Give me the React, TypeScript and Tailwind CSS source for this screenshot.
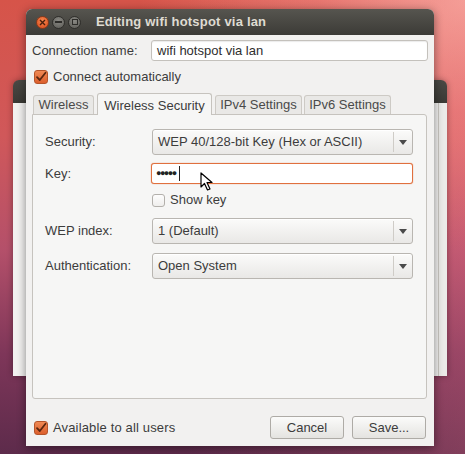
import React from "react";

const font = "font-['Liberation_Sans',Arial,sans-serif]";

function Check({ checked }: { checked: boolean }) {
  if (checked) {
    return (
      <div className="w-[14px] h-[14px] rounded-[3px] border border-[#b5542a] bg-[linear-gradient(180deg,#f08a55,#dc5f2c)] flex items-center justify-center shrink-0">
        <svg width="12" height="12" viewBox="0 0 12 12">
          <path d="M2 6.2 L4.8 9 L10.5 1.8" fill="none" stroke="#5b2710" strokeWidth="1.8" strokeLinecap="round" strokeLinejoin="round" />
        </svg>
      </div>
    );
  }
  return <div className="w-[13px] h-[13px] rounded-[3px] border border-[#b3b0ab] bg-[linear-gradient(180deg,#fdfdfd,#efeeec)] shrink-0" />;
}

function Combo({ text }: { text: string }) {
  return (
    <div className="h-[26px] w-[261px] rounded-[3px] border border-[#b9b6b1] bg-[linear-gradient(180deg,#fbfbfa,#e9e8e6)] flex items-center shadow-[inset_0_1px_0_#ffffff]">
      <span className="flex-1 pl-[5px] text-[13px] text-[#3c3c3c]">{text}</span>
      <div className="w-px h-[20px] bg-[#cfccc7]" />
      <div className="w-[18px] flex justify-center">
        <svg width="8" height="5" viewBox="0 0 8 5">
          <path d="M0 0 H8 L4 5 Z" fill="#4a4a4a" />
        </svg>
      </div>
    </div>
  );
}

export default function App() {
  return (
    <div
      className={`${font} relative w-[465px] h-[454px] overflow-hidden bg-[radial-gradient(ellipse_70%_55%_at_100%_0%,#f6a99a_0%,rgba(240,140,130,0.6)_45%,rgba(240,140,130,0)_100%),linear-gradient(180deg,#d65449_0%,#d0585a_30%,#b4506a_55%,#7e3659_78%,#5d2b4b_100%)]`}
    >
      {/* right side tint */}
      <div className="absolute inset-0 bg-[linear-gradient(90deg,rgba(0,0,0,0)_40%,rgba(240,120,140,0.25)_100%)]" />

      {/* background window */}
      <div className="absolute left-[13px] top-[80px] w-[434px] h-[296px] rounded-t-[6px] overflow-hidden shadow-[0_0_6px_rgba(0,0,0,0.35)] flex flex-col">
        <div className="h-[23px] bg-[linear-gradient(180deg,#4a4945,#3a3935)]" />
        <div className="flex-1 bg-[#f2f1f0] flex">
          <div className="w-[10px]" />
          <div className="flex-1" />
          <div className="w-[9px] border-l border-[#c9c6c1] bg-[#ebeae8]" />
        </div>
      </div>

      {/* main dialog */}
      <div className="absolute left-[26px] top-[9px] w-[408px] h-[437px] rounded-t-[6px] overflow-hidden shadow-[0_2px_10px_rgba(0,0,0,0.45)] flex flex-col bg-[#f2f1f0]">
        {/* title bar */}
        <div className="h-[26px] bg-[linear-gradient(180deg,#56554f,#3c3b37)] flex items-center pl-[10px]">
          <div className="flex items-center gap-[3px]">
            <div className="w-[13px] h-[13px] rounded-full bg-[radial-gradient(circle_at_50%_35%,#f6884f,#d9481a)] border border-[#8a3a1a] flex items-center justify-center">
              <svg width="7" height="7" viewBox="0 0 7 7">
                <path d="M1 1 L6 6 M6 1 L1 6" stroke="#4a1e0c" strokeWidth="1.4" />
              </svg>
            </div>
            <div className="w-[13px] h-[13px] rounded-full bg-[radial-gradient(circle_at_50%_35%,#8a8984,#5b5a55)] border border-[#2f2e2b] flex items-center justify-center">
              <div className="w-[7px] h-[1.5px] bg-[#2e2d2a]" />
            </div>
            <div className="w-[13px] h-[13px] rounded-full bg-[radial-gradient(circle_at_50%_35%,#8a8984,#5b5a55)] border border-[#2f2e2b] flex items-center justify-center">
              <div className="w-[6px] h-[6px] border border-[#2e2d2a]" />
            </div>
          </div>
          <span className="ml-[15px] text-[13px] font-bold text-[#dfdbd2] tracking-[0.2px]">Editing wifi hotspot via lan</span>
        </div>

        {/* body */}
        <div className="flex-1 flex flex-col px-[6px] pt-[5px]">
          <div className="flex items-center h-[21px]">
            <span className="w-[119px] text-[13px] text-[#3c3c3c]">Connection name:</span>
            <div className="flex-1 h-[21px] bg-white border border-[#c4c1bc] rounded-[3px] flex items-center pl-[5px] text-[13px] text-[#2e2e2e] shadow-[inset_0_1px_1px_rgba(0,0,0,0.08)]">
              wifi hotspot via lan
            </div>
          </div>
          <div className="flex items-center h-[16px] mt-[8px] pl-[2px] gap-[5px]">
            <Check checked />
            <span className="text-[13px] text-[#3c3c3c]">Connect automatically</span>
          </div>

          {/* tabs */}
          <div className="mt-[8px] flex items-end pl-px h-[21px]">
            <div className="w-[61px] h-[19px] bg-[#e9e8e6] border border-b-0 border-[#cdcac5] rounded-t-[3px] text-[13px] text-[#4a4a4a] flex items-center justify-center">Wireless</div>
            <div className="ml-[3px] w-[115px] h-[22px] pt-[2px] bg-[#f6f6f5] border border-b-0 border-[#c6c3be] rounded-t-[3px] text-[13px] text-[#3c3c3c] relative top-px z-10 flex justify-center items-start">Wireless Security</div>
            <div className="ml-[3px] w-[87px] h-[19px] bg-[#e9e8e6] border border-b-0 border-[#cdcac5] rounded-t-[3px] text-[13px] text-[#4a4a4a] flex items-center justify-center">IPv4 Settings</div>
            <div className="ml-[2px] w-[87px] h-[19px] bg-[#e9e8e6] border border-b-0 border-[#cdcac5] rounded-t-[3px] text-[13px] text-[#4a4a4a] flex items-center justify-center">IPv6 Settings</div>
          </div>

          {/* panel */}
          <div className="h-[285px] mr-px bg-[#f6f6f5] border border-[#c6c3be] rounded-b-[3px] rounded-tr-[3px] flex flex-col pl-[12px] pt-[14px]">
            <div className="flex items-center">
              <span className="w-[107px] text-[13px] text-[#3c3c3c]">Security:</span>
              <Combo text="WEP 40/128-bit Key (Hex or ASCII)" />
            </div>
            <div className="flex items-center mt-[8px]">
              <span className="w-[106px] text-[13px] text-[#3c3c3c]">Key:</span>
              <div className="relative w-[262px] h-[21px] bg-white border border-[#e0703e] rounded-[3px] flex items-center pl-[4px] shadow-[0_0_1px_#e0703e]">
                <span className="text-[9px] text-[#222] tracking-[-1.5px] leading-none">●●●●●</span>
                <div className="ml-[3px] w-px h-[15px] bg-[#222]" />
                <svg className="absolute left-[48px] top-[8px]" width="14" height="20" viewBox="0 0 14 20">
                  <path d="M1 1 L1 15 L4.5 11.5 L7.5 18 L10 17 L7 10.5 L12 10.5 Z" fill="#ffffff" stroke="#000" strokeWidth="1.2" strokeLinejoin="round" />
                </svg>
              </div>
            </div>
            <div className="flex items-center mt-[9px] pl-[107px] gap-[5px] h-[14px]">
              <Check checked={false} />
              <span className="text-[13px] text-[#3c3c3c]">Show key</span>
            </div>
            <div className="flex items-center mt-[11px]">
              <span className="w-[107px] text-[13px] text-[#3c3c3c]">WEP index:</span>
              <Combo text="1 (Default)" />
            </div>
            <div className="flex items-center mt-[9px]">
              <span className="w-[107px] text-[13px] text-[#3c3c3c]">Authentication:</span>
              <Combo text="Open System" />
            </div>
          </div>

          {/* bottom */}
          <div className="flex items-center mt-[17px] h-[23px]">
            <div className="flex items-center gap-[5px] pl-[2px]">
              <Check checked />
              <span className="text-[13px] text-[#3c3c3c] tracking-[0.15px]">Available to all users</span>
            </div>
            <div className="ml-auto mr-[2px] flex gap-[8px]">
              <div className="w-[74px] h-[23px] rounded-[3px] border border-[#aeaba6] bg-[linear-gradient(180deg,#fbfbfa,#e4e3e0)] flex items-center justify-center text-[13px] text-[#3c3c3c]">Cancel</div>
              <div className="w-[74px] h-[23px] rounded-[3px] border border-[#aeaba6] bg-[linear-gradient(180deg,#fbfbfa,#e4e3e0)] flex items-center justify-center text-[13px] text-[#3c3c3c]">Save...</div>
            </div>
          </div>
        </div>
      </div>
    </div>
  );
}
